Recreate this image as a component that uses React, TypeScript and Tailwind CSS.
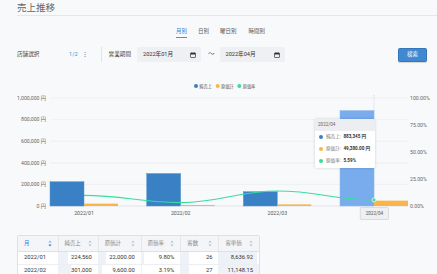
import React from 'react';

const BLUE = '#3a80c4';
const ORANGE = '#fbb448';
const GREEN = '#34dfa0';

const centers = [84, 180.7, 277.3, 374];
const sales = [224560, 301000, 132400, 883345];
const costs = [22000, 9600, 15000, 49380];
const rates = [9.8, 3.19, 13.9, 5.59];

const yOf = (v: number) => 206 - (v / 1000000) * 108;
const yRate = (r: number) => 206 - (r / 100) * 108;

const SortIcon = ({ active }: { active?: boolean }) => (
  <svg width="4" height="7" viewBox="0 0 4 7">
    <path d="M2 0.5 L3.6 2.6 H0.4 Z" fill={active ? '#7fb0e6' : '#b8c2cf'} />
    <path d="M2 6.5 L3.6 4.4 H0.4 Z" fill={active ? '#2f7fd0' : '#b8c2cf'} />
  </svg>
);

const CalendarIcon = () => (
  <svg width="6" height="6" viewBox="0 0 12 12">
    <rect x="1" y="2" width="10" height="9" rx="1" fill="none" stroke="#333" strokeWidth="1.4" />
    <rect x="1" y="2" width="10" height="3" fill="#333" />
    <rect x="3" y="0.5" width="1.4" height="2.5" fill="#333" />
    <rect x="7.6" y="0.5" width="1.4" height="2.5" fill="#333" />
  </svg>
);

function Chart() {
  const pts = centers.map((x, i) => [x, yRate(rates[i])]);
  let d = `M${pts[0][0]} ${pts[0][1]}`;
  for (let i = 1; i < pts.length; i++) {
    const [x0, y0] = pts[i - 1];
    const [x1, y1] = pts[i];
    const dx = (x1 - x0) / 2.4;
    d += ` C${x0 + dx} ${y0} ${x1 - dx} ${y1} ${x1} ${y1}`;
  }
  const leftTicks = ['0 円', '200,000 円', '400,000 円', '600,000 円', '800,000 円', '1,000,000 円'];
  const rightTicks = ['0.00%', '25.00%', '50.00%', '75.00%', '100.00%'];

  return (
    <div className="relative mt-[16px] h-[144px]">
      <svg width="437" height="144" viewBox="0 78 437 144" className="block">
        {/* legend */}
        <g fontSize="4.2" fill="#555">
          <circle cx="196" cy="86" r="2" fill={BLUE} />
          <text x="199.3" y="87.6">純売上</text>
          <circle cx="217.7" cy="86" r="2" fill={ORANGE} />
          <text x="221" y="87.6">原価計</text>
          <circle cx="239.3" cy="86" r="2" fill={GREEN} />
          <text x="242.7" y="87.6">原価率</text>
        </g>

        {/* grid + left axis */}
        {leftTicks.map((t, i) => {
          const y = 206 - i * 21.6;
          return (
            <g key={t}>
              <line x1="50" x2="408" y1={y} y2={y} stroke={i === 0 ? '#dcdfe3' : '#eceef0'} strokeWidth="0.8" />
              <text x="46" y={y + 1.8} textAnchor="end" fontSize="5.2" fill="#666">{t}</text>
            </g>
          );
        })}
        {rightTicks.map((t, i) => (
          <text key={t} x="410" y={206 - i * 27 + 1.8} fontSize="5.2" fill="#666">{t}</text>
        ))}

        {/* axis pointer */}
        <line x1="374" x2="374" y1="95" y2="206" stroke="#c4c7cc" strokeWidth="0.6" strokeDasharray="1.2 1.2" />

        {/* bars */}
        {centers.map((c, i) => (
          <g key={c}>
            <rect x={c - 34} y={yOf(sales[i])} width="34" height={206 - yOf(sales[i])} fill={i === 3 ? '#78aced' : BLUE} stroke={i === 3 ? '#8dbaf0' : '#5d97cf'} strokeWidth="0.5" />
            <rect x={c} y={yOf(costs[i])} width="34" height={206 - yOf(costs[i])} fill={ORANGE} />
          </g>
        ))}

        {/* rate line */}
        <path d={d} fill="none" stroke={GREEN} strokeWidth="1.2" />
        <circle cx="374" cy={yRate(5.59)} r="2" fill={GREEN} stroke="#fff" strokeWidth="0.7" />

        {/* x labels */}
        {['2022/01', '2022/02', '2022/03'].map((t, i) => (
          <text key={t} x={centers[i]} y="215" textAnchor="middle" fontSize="5.2" fill="#555">{t}</text>
        ))}
        <rect x="360.3" y="207.5" width="28.2" height="12" fill="#eef0f2" stroke="#c8ccd1" strokeWidth="0.6" rx="0.8" />
        <text x="374.4" y="215.3" textAnchor="middle" fontSize="4.6" fill="#555">2022/04</text>
      </svg>

      {/* tooltip */}
      <div className="absolute left-[315px] top-[41px] w-[60px] h-[48.5px] bg-white rounded-[1.5px] shadow-[0_0_3px_rgba(0,0,0,0.18)] overflow-hidden text-[4.6px] leading-none">
        <div className="h-[12px] bg-[#eceef1] flex items-center pl-[3px] text-[#666]">2022/04</div>
        <div className="flex flex-col pl-[4px]">
          {[
            [BLUE, '純売上:', '883,345 円'],
            [ORANGE, '原価計:', '49,380.00 円'],
            [GREEN, '原価率:', '5.59%'],
          ].map(([c, l, v]) => (
            <div key={l} className="h-[12px] flex items-center">
              <span className="w-[4px] h-[4px] rounded-full" style={{ background: c }} />
              <span className="ml-[3px] text-[#777]">{l}</span>
              <span className="ml-[2.5px] font-bold text-[#333]">{v}</span>
            </div>
          ))}
        </div>
      </div>
    </div>
  );
}

const cols = [
  { label: '月', w: 'w-[40px]', active: true },
  { label: '純売上', w: 'w-[40.5px]' },
  { label: '原価計', w: 'w-[43.5px]' },
  { label: '原価率', w: 'w-[40px]' },
  { label: '客数', w: 'w-[38.5px]' },
  { label: '客単価', w: 'w-[41px]' },
];

const rows = [
  { cells: ['2022/01', '224,560', '22,000.00', '9.80%', '26', '8,636.92'], bars: [0, 25, 20, 8, 22, 94] },
  { cells: ['2022/02', '301,000', '9,600.00', '3.19%', '27', '11,148.15'], bars: [0, 34, 10, 3, 23, 100] },
];

function DataTable() {
  return (
    <div className="mt-[13px] ml-[17px] w-[243px] border border-[#dde1e6] rounded-[2px] bg-white overflow-hidden">
      <div className="flex h-[16px] bg-[#f3f5f8] border-b border-[#dde1e6]">
        {cols.map((c, i) => (
          <div
            key={c.label}
            className={`${c.w} flex items-center justify-between pl-[6px] pr-[6px] text-[5.4px] ${i > 0 ? 'border-l border-[#e3e6ea]' : ''} ${c.active ? 'text-[#2f7fd0]' : 'text-[#888]'}`}
          >
            <span>{c.label}</span>
            <SortIcon active={c.active} />
          </div>
        ))}
      </div>
      {rows.map((r) => (
        <div key={r.cells[0]} className="flex h-[12.5px] border-b border-[#eceef1]">
          {r.cells.map((v, i) => (
            <div
              key={i}
              className={`${cols[i].w} relative flex items-center text-[5.8px] text-[#333] ${i === 0 ? 'pl-[6px]' : 'justify-end pr-[6px]'}`}
            >
              {i > 0 && (
                <span className="absolute left-0 top-0 bottom-0 bg-[#edf2f9]" style={{ width: `${r.bars[i]}%` }} />
              )}
              <span className="relative">{v}</span>
            </div>
          ))}
        </div>
      ))}
    </div>
  );
}

export default function App() {
  return (
    <div className="w-[437px] h-[274px] overflow-hidden bg-[#f8f9fa] font-[Roboto,'Noto_Sans_CJK_JP',sans-serif] text-[#444]">
      {/* title */}
      <div className="h-[16px] ml-[17px] border-b border-[#e4e6e9] flex items-center">
        <h1 className="text-[9.5px] leading-none text-[#666]">売上推移</h1>
      </div>

      {/* tabs */}
      <div className="mt-[9px] pl-[176px] flex gap-[11px] text-[5.5px] text-[#555]">
        {['月別', '日別', '曜日別', '時間別'].map((t, i) => (
          <div
            key={t}
            className={`h-[13px] flex items-center ${i === 0 ? 'text-[#2f7fd0] border-b-[1.3px] border-[#4a90d9]' : ''} ${i === 2 ? 'mr-[1px]' : ''}`}
          >
            {t}
          </div>
        ))}
      </div>

      {/* filters */}
      <div className="mt-[9px] h-[15px] flex items-center pl-[17px] pr-[10px] text-[5.6px]">
        <span className="w-[52px] text-[#444]">店舗選択</span>
        <span className="text-[#4a8fd6]">1/2</span>
        <span className="ml-[4px] text-[#4a8fd6] font-bold">⋮</span>
        <span className="ml-[13px] h-[15px] border-l border-[#e0e3e7]" />
        <span className="ml-[7px] text-[#444]">営業期間</span>
        <div className="ml-[6px] w-[64px] h-[15px] bg-[#eef0f3] rounded-[1.5px] flex items-center justify-between pl-[6px] pr-[5px] text-[#333]">
          <span>2022年01月</span>
          <CalendarIcon />
        </div>
        <span className="ml-[7px] text-[#555] text-[6.5px]">〜</span>
        <div className="ml-[5px] w-[65px] h-[15px] bg-[#eef0f3] rounded-[1.5px] flex items-center justify-between pl-[6px] pr-[5px] text-[#333]">
          <span>2022年04月</span>
          <CalendarIcon />
        </div>
        <button className="ml-auto w-[29px] h-[14px] bg-[#4089d0] border border-[#3577bb] rounded-[1.5px] text-white text-[5.4px] shadow-[0_1px_1px_rgba(0,0,0,0.15)]">
          検索
        </button>
      </div>

      <Chart />
      <DataTable />
    </div>
  );
}
